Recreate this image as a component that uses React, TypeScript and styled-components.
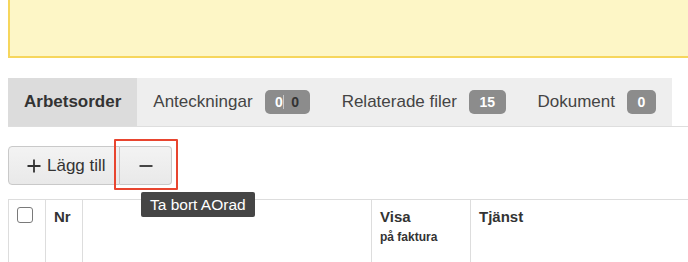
import React from "react";
import styled, { createGlobalStyle } from "styled-components";

const GlobalStyle = createGlobalStyle`
  body {
    margin: 0;
    overflow: hidden;
    background: #ffffff;
    font-family: "Liberation Sans", Arial, Helvetica, sans-serif;
    color: #333333;
  }
`;

interface TabItem {
  label: string;
  badge?: string;
  active?: boolean;
}

const tabs: TabItem[] = [
  { label: "Arbetsorder", active: true },
  { label: "Anteckningar", badge: "0|0" },
  { label: "Relaterade filer", badge: "15" },
  { label: "Dokument", badge: "0" },
];

// the notes badge in the screenshot shows a caret mid-edit: "0| 0"
const renderBadge = (value: string) => {
  if (value === "0|0") {
    return (
      <Badge>
        <BadgeLight>0</BadgeLight>
        <BadgeCaret />
        <BadgeDark>0</BadgeDark>
      </Badge>
    );
  }
  return <Badge>{value}</Badge>;
};

const App: React.FC = () => {
  return (
    <Page>
      <GlobalStyle />
      <Notice />

      <TabList>
        {tabs.map((tab) => (
          <Tab key={tab.label} $active={tab.active}>
            {tab.label}
            {tab.badge !== undefined && renderBadge(tab.badge)}
          </Tab>
        ))}
      </TabList>

      <Toolbar>
        <AddButton>
          <svg width="14" height="14" viewBox="0 0 14 14">
            <path d="M7 0.5v13M0.5 7h13" stroke="#333" strokeWidth="1.8" fill="none" />
          </svg>
          Lägg till
        </AddButton>
        <RemoveWrap>
          <RemoveButton aria-label="Ta bort AOrad">
            <svg width="14" height="14" viewBox="0 0 14 14">
              <path d="M0.5 7h13" stroke="#333" strokeWidth="1.8" fill="none" />
            </svg>
          </RemoveButton>
          <Highlight />
          <Tooltip>Ta bort AOrad</Tooltip>
        </RemoveWrap>
      </Toolbar>

      <Table>
        <colgroup>
          <col style={{ width: 37 }} />
          <col style={{ width: 37 }} />
          <col style={{ width: 289 }} />
          <col style={{ width: 99 }} />
          <col />
        </colgroup>
        <thead>
          <tr>
            <HeadCell>
              <Checkbox />
            </HeadCell>
            <HeadCell>Nr</HeadCell>
            <HeadCell />
            <HeadCell>
              Visa
              <SubLabel>på faktura</SubLabel>
            </HeadCell>
            <HeadCell>Tjänst</HeadCell>
          </tr>
        </thead>
        <tbody>
          <tr>
            <BodyCell />
            <BodyCell />
            <BodyCell />
            <BodyCell />
            <BodyCell />
          </tr>
        </tbody>
      </Table>
    </Page>
  );
};

const Page = styled.div`
  width: 760px;
  padding-left: 8px;
`;

const Notice = styled.div`
  height: 56px;
  background: #fdf6c6;
  border: 2px solid #f6d65c;
  border-top: none;
`;

const TabList = styled.div`
  display: flex;
  margin-top: 20px;
  border-bottom: 1px solid #dedede;
`;

const Tab = styled.div<{ $active?: boolean }>`
  display: flex;
  align-items: center;
  height: 48px;
  padding: 0 16px;
  background: ${({ $active }) => ($active ? "#dcdcdc" : "#eeeeee")};
  font-size: 17px;
  font-weight: ${({ $active }) => ($active ? 700 : 400)};
  color: ${({ $active }) => ($active ? "#333333" : "#444444")};
  white-space: nowrap;
`;

const Badge = styled.span`
  display: inline-flex;
  align-items: center;
  height: 24px;
  margin-left: 12px;
  padding: 0 10.5px;
  border-radius: 5px;
  background: #8c8c8c;
  color: #ffffff;
  font-size: 14px;
  font-weight: 700;
`;

const BadgeLight = styled.span`
  color: #ffffff;
`;

const BadgeCaret = styled.span`
  width: 1.5px;
  height: 14px;
  margin: 0 7px 0 0;
  background: #c8c8c8;
`;

const BadgeDark = styled.span`
  color: #333333;
`;

const Toolbar = styled.div`
  display: flex;
  margin-top: 19px;
`;

const ButtonBase = styled.button`
  display: inline-flex;
  align-items: center;
  height: 39px;
  border: 1px solid #c9c9c9;
  background: linear-gradient(#f3f3f3, #e9e9e9);
  font-family: inherit;
  font-size: 17px;
  color: #333333;
  cursor: pointer;
`;

const AddButton = styled(ButtonBase)`
  gap: 6px;
  width: 112px;
  padding: 0 0 0 18px;
  border-radius: 4px 0 0 4px;
`;

const RemoveWrap = styled.div`
  position: relative;
`;

const RemoveButton = styled(ButtonBase)`
  justify-content: center;
  width: 52px;
  padding: 0;
  border-left: none;
  border-radius: 0 4px 4px 0;
`;

const Highlight = styled.div`
  position: absolute;
  left: -6px;
  top: -7px;
  width: 64px;
  height: 51px;
  box-sizing: border-box;
  border: 2px solid #e8452f;
  border-radius: 1px;
  pointer-events: none;
`;

const Tooltip = styled.div`
  position: absolute;
  left: 21px;
  top: 46px;
  z-index: 2;
  height: 25px;
  padding: 0 9px;
  display: flex;
  align-items: center;
  border-radius: 2px;
  background: #454545;
  color: #ffffff;
  font-size: 15.5px;
  white-space: nowrap;
`;

const Table = styled.table`
  width: 752px;
  margin-top: 14px;
  border-collapse: collapse;
  table-layout: fixed;
`;

const HeadCell = styled.th`
  height: 56px;
  padding: 7px 8px 0;
  border: 1px solid #dddddd;
  vertical-align: top;
  text-align: left;
  font-size: 15px;
  font-weight: 700;
  line-height: 20px;
  color: #333333;
`;

const SubLabel = styled.div`
  margin-top: 2px;
  font-size: 12px;
  line-height: 16px;
`;

const BodyCell = styled.td`
  height: 40px;
  border: 1px solid #dddddd;
`;

const Checkbox = styled.span`
  display: block;
  width: 16px;
  height: 16px;
  box-sizing: border-box;
  border: 1.5px solid #7a7a7a;
  border-radius: 3px;
  background: #ffffff;
`;

export default App;
